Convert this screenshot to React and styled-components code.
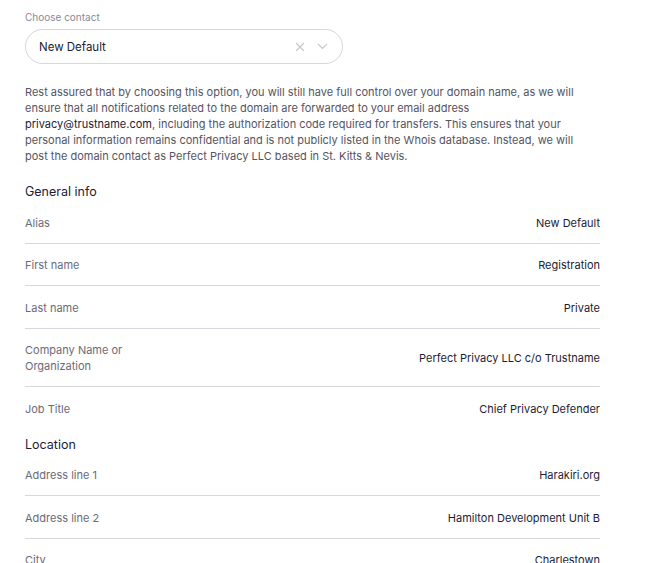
import styled, { createGlobalStyle } from 'styled-components';

const GlobalStyle = createGlobalStyle`
    body {
        margin: 0;
        background: #ffffff;
        font-family: Inter, "Liberation Sans", sans-serif;
    }
`;

const general = [
    { label: 'Alias', value: 'New Default' },
    { label: 'First name', value: 'Registration' },
    { label: 'Last name', value: 'Private' },
    { label: 'Company Name or\nOrganization', value: 'Perfect Privacy LLC c/o Trustname' },
    { label: 'Job Title', value: 'Chief Privacy Defender' },
];

const location = [
    { label: 'Address line 1', value: 'Harakiri.org' },
    { label: 'Address line 2', value: 'Hamilton Development Unit B' },
    { label: 'City', value: 'Charlestown' },
];

function InfoSection({ title, rows, gap }) {
    return (
        <Section $gap={gap}>
            <SectionTitle>{title}</SectionTitle>
            {rows.map((row) => (
                <Row key={row.label}>
                    <Label>{row.label}</Label>
                    <Value>{row.value}</Value>
                </Row>
            ))}
        </Section>
    );
}

export default function App() {
    return (
        <Page>
            <GlobalStyle />
            <Field>
                <FieldLabel>Choose contact</FieldLabel>
                <Select>
                    <span>New Default</span>
                    <Icons>
                        <svg width="10" height="10" viewBox="0 0 10 10">
                            <path d="M1 1 L9 9 M9 1 L1 9" stroke="#c6c5d0" strokeWidth="1.1" fill="none" />
                        </svg>
                        <svg width="11" height="7" viewBox="0 0 11 7">
                            <path d="M1 1 L5.5 5.5 L10 1" stroke="#c6c5d0" strokeWidth="1.1" fill="none" />
                        </svg>
                    </Icons>
                </Select>
            </Field>
            <Notice>
                Rest assured that by choosing this option, you will still have full control over your domain name, as we will
                ensure that all notifications related to the domain are forwarded to your email address{' '}
                <Email>privacy@trustname.com</Email>, including the authorization code required for transfers. This ensures that your
                personal information remains confidential and is not publicly listed in the Whois database. Instead, we will
                post the domain contact as Perfect Privacy LLC based in St. Kitts &amp; Nevis.
            </Notice>
            <InfoSection title="General info" rows={general} gap={19} />
            <InfoSection title="Location" rows={location} gap={7} />
        </Page>
    );
}

const Page = styled.div`
    padding: 11px 0 0 25px;
    width: 575px;
    display: flex;
    flex-direction: column;
`;

const Field = styled.div`
    display: flex;
    flex-direction: column;
    gap: 5px;
`;

const FieldLabel = styled.label`
    font-size: 10px;
    line-height: 13px;
    color: #8a8996;
`;

const Select = styled.div`
    width: 318px;
    height: 35px;
    box-sizing: border-box;
    border: 1px solid #d6d5e2;
    border-radius: 18px;
    display: flex;
    align-items: center;
    justify-content: space-between;
    padding: 0 14px 0 13px;
    font-size: 11.5px;
    color: #1d1c33;
`;

const Icons = styled.div`
    display: flex;
    align-items: center;
    gap: 12px;
`;

const Notice = styled.p`
    margin: 20px 0 0;
    max-width: 565px;
    font-size: 11px;
    line-height: 16px;
    color: #55545e;
`;

const Email = styled.span`
    color: #1d1c33;
`;

const Section = styled.section`
    margin-top: ${(props) => props.$gap}px;
    display: flex;
    flex-direction: column;
`;

const SectionTitle = styled.h3`
    margin: 0;
    font-size: 12.5px;
    line-height: 18px;
    font-weight: 400;
    color: #1d1c33;
`;

const Row = styled.div`
    display: flex;
    justify-content: space-between;
    align-items: center;
    padding: 13.5px 0 12px;
    border-bottom: 1px solid #d6d5e0;
    &:last-child {
        border-bottom: none;
    }
`;

const Label = styled.span`
    font-size: 11px;
    line-height: 16px;
    color: #6b6a76;
    white-space: pre-line;
`;

const Value = styled.span`
    font-size: 11px;
    line-height: 16px;
    color: #1d1c33;
`;
